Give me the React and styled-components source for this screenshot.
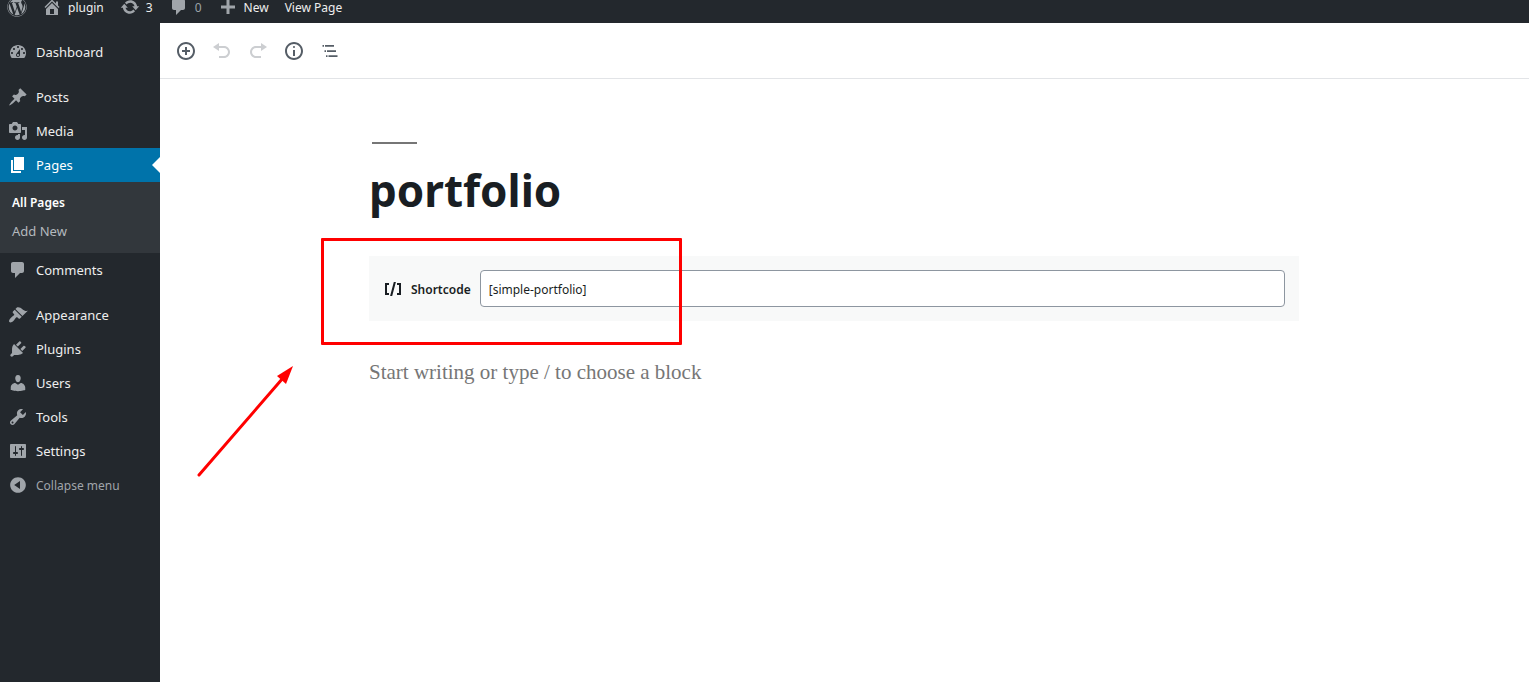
import React from "react";
import styled, { createGlobalStyle, css } from "styled-components";
import { FaWordpress } from "react-icons/fa";

const GlobalStyle = createGlobalStyle`
  *, *::before, *::after { box-sizing: border-box; }
  body {
    margin: 0;
    background: #fff;
    color: #191e23;
    font-family: "Noto Sans", "Open Sans", sans-serif;
    font-size: 12px;
  }
  button, input { font: inherit; }
  a { color: inherit; text-decoration: none; }
`;

const paths = {
  home: "M16 8.5l1.53 1.53-1.06 1.06L10 4.6l-6.47 6.49-1.06-1.06L10 2.5l4 4v-2h2v4zm-6-2.46l6 5.99V18H4v-5.97zM12 17v-5H8v5h4z",
  update: "M10.2 3.28c3.53 0 6.43 2.61 6.92 6h2.08l-3.5 4-3.5-4h2.32c-.45-1.97-2.21-3.45-4.32-3.45-1.45 0-2.73.71-3.54 1.78L4.95 5.66C6.23 4.2 8.11 3.28 10.2 3.28zm-.4 13.44c-3.52 0-6.43-2.61-6.92-6H.8l3.5-4c1.17 1.33 2.33 2.67 3.5 4H5.48c.45 1.97 2.21 3.45 4.32 3.45 1.45 0 2.73-.71 3.54-1.78l1.71 1.95c-1.28 1.46-3.15 2.38-5.25 2.38z",
  comments: "M5 2h9c1.1 0 2 .9 2 2v7c0 1.1-.9 2-2 2h-2l-5 5v-5H5c-1.1 0-2-.9-2-2V4c0-1.1.9-2 2-2z",
  plus: "M17 8.5v3h-5.5V17h-3v-5.5H3v-3h5.5V3h3v5.5z",
  dashboard: "M3.76 16h12.48c1.1-1.37 1.76-3.11 1.76-5 0-4.42-3.58-8-8-8s-8 3.58-8 8c0 1.89.66 3.63 1.76 5zM10 4c.55 0 1 .45 1 1s-.45 1-1 1-1-.45-1-1 .45-1 1-1zM6 6c.55 0 1 .45 1 1s-.45 1-1 1-1-.45-1-1 .45-1 1-1zm8 0c.55 0 1 .45 1 1s-.45 1-1 1-1-.45-1-1 .45-1 1-1zm-5.37 5.55L12 7v6c0 1.1-.9 2-2 2s-2-.9-2-2c0-.57.24-1.08.63-1.45zM4 10c.55 0 1 .45 1 1s-.45 1-1 1-1-.45-1-1 .45-1 1-1zm12 0c.55 0 1 .45 1 1s-.45 1-1 1-1-.45-1-1 .45-1 1-1zm-5 3c0-.55-.45-1-1-1s-1 .45-1 1 .45 1 1 1 1-.45 1-1z",
  posts: "M10.44 3.02l1.82-1.82 6.36 6.35-1.83 1.82c-1.05-.68-2.48-.57-3.41.36l-.75.75c-.92.93-1.04 2.35-.35 3.41l-1.83 1.82-2.41-2.41-2.8 2.79c-.42.42-3.38 2.71-3.8 2.29s1.86-3.39 2.28-3.81l2.79-2.79L4.1 9.36l1.83-1.82c1.05.69 2.48.57 3.4-.36l.75-.75c.93-.92 1.05-2.35.36-3.41z",
  media: "M13 11V4c0-.55-.45-1-1-1h-1.67L9 1H5L3.67 3H2c-.55 0-1 .45-1 1v7c0 .55.45 1 1 1h10c.55 0 1-.45 1-1zM7 4.5c1.38 0 2.5 1.12 2.5 2.5S8.38 9.5 7 9.5 4.5 8.38 4.5 7 5.62 4.5 7 4.5zM14 6h5v10.5c0 1.38-1.12 2.5-2.5 2.5S14 17.88 14 16.5s1.12-2.5 2.5-2.5c.17 0 .34.02.5.05V9h-3V6zm-4 8.05V13h2v3.5c0 1.38-1.12 2.5-2.5 2.5S7 17.88 7 16.5 8.12 14 9.5 14c.17 0 .34.02.5.05z",
  pages: "M6 15V2h10v13H6zm-1 1h8v2H3V5h2v11z",
  appearance: "M14.48 11.06L7.41 3.99l1.5-1.5c.5-.56 2.3-.47 3.51.32 1.21.8 1.43 1.28 2.91 2.1 1.18.64 2.45 1.26 4.45.85zm-.71.71L6.7 4.7 4.93 6.47c-.39.39-.39 1.02 0 1.41l1.06 1.06c.39.39.39 1.03 0 1.42-.6.6-1.43 1.11-2.21 1.69-.35.26-.7.53-1.01.84C1.43 14.23.4 16.08 1.4 17.07c.99 1 2.84-.03 4.18-1.36.31-.31.58-.66.85-1.02.57-.78 1.08-1.61 1.69-2.21.39-.39 1.02-.39 1.41 0l1.06 1.06c.39.39 1.02.39 1.41 0z",
  plugins: "M13.11 4.36L9.87 7.6 8 5.73l3.24-3.24c.35-.34 1.05-.2 1.56.32.52.51.66 1.21.31 1.55zm-8 1.77l.91-1.12 9.01 9.01-1.19.84c-.71.71-2.63 1.16-3.82 1.16H6.14L4.9 17.26c-.59.59-1.54.59-2.12 0-.59-.58-.59-1.53 0-2.12l1.24-1.24v-3.88c0-1.13.4-3.19 1.09-3.89zm7.26 3.97l3.24-3.24c.34-.35 1.04-.21 1.55.31.52.51.66 1.21.31 1.55l-3.24 3.25z",
  users: "M10 9.25c-2.27 0-2.73-3.44-2.73-3.44C7 4.02 7.82 2 9.97 2c2.16 0 2.98 2.02 2.71 3.81 0 0-.41 3.44-2.68 3.44zm0 2.57L12.72 10c2.39 0 4.52 2.33 4.52 4.53v2.49s-3.65 1.13-7.24 1.13c-3.65 0-7.24-1.13-7.24-1.13v-2.49c0-2.25 1.94-4.48 4.47-4.48z",
  tools: "M16.68 9.77c-1.34 1.34-3.3 1.67-4.95.99l-5.41 6.52c-.99.99-2.59.99-3.58 0s-.99-2.59 0-3.57l6.52-5.42c-.68-1.65-.35-3.61.99-4.95 1.28-1.28 3.12-1.62 4.72-1.06l-2.89 2.89 2.82 2.82 2.86-2.87c.53 1.58.18 3.39-1.08 4.65zM3.81 16.21c.4.39 1.04.39 1.43 0 .4-.4.4-1.04 0-1.43-.39-.4-1.03-.4-1.43 0-.39.39-.39 1.03 0 1.43z",
  settings: "M18 16V4c0-.55-.45-1-1-1H3c-.55 0-1 .45-1 1v12c0 .55.45 1 1 1h14c.55 0 1-.45 1-1zM8 11h1c.55 0 1 .45 1 1s-.45 1-1 1H8v1.5c0 .28-.22.5-.5.5s-.5-.22-.5-.5V13H6c-.55 0-1-.45-1-1s.45-1 1-1h1V5.5c0-.28.22-.5.5-.5s.5.22.5.5V11zm5-2h-1c-.55 0-1-.45-1-1s.45-1 1-1h1V5.5c0-.28.22-.5.5-.5s.5.22.5.5V7h1c.55 0 1 .45 1 1s-.45 1-1 1h-1v5.5c0 .28-.22.5-.5.5s-.5-.22-.5-.5V9z",
  collapse: "M10 2.16c4.33 0 7.84 3.51 7.84 7.84s-3.51 7.84-7.84 7.84S2.16 14.33 2.16 10 5.71 2.16 10 2.16zm2 11.72V6.12L6.18 9.97z",
  insert: "M10 1c-5 0-9 4-9 9s4 9 9 9 9-4 9-9-4-9-9-9zm0 16c-3.9 0-7-3.1-7-7s3.1-7 7-7 7 3.1 7 7-3.1 7-7 7zm1-11H9v3H6v2h3v3h2v-3h3V9h-3V6z",
  undo: "M12 5H7V2L1 6l6 4V7h5c2.2 0 4 1.8 4 4s-1.8 4-4 4H7v2h5c3.3 0 6-2.7 6-6s-2.7-6-6-6z",
  redo: "M8 5h5V2l6 4-6 4V7H8c-2.2 0-4 1.8-4 4s1.8 4 4 4h5v2H8c-3.3 0-6-2.7-6-6s2.7-6 6-6z",
  info: "M9 15h2V9H9v6zm1-10c-.5 0-1 .5-1 1s.5 1 1 1 1-.5 1-1-.5-1-1-1zm0-4c-5 0-9 4-9 9s4 9 9 9 9-4 9-9-4-9-9-9zm0 16c-3.9 0-7-3.1-7-7s3.1-7 7-7 7 3.1 7 7-3.1 7-7 7z",
  outline: "M2.5 4H4v1.7H2.5zM5 4h9v1.7H5zM4.5 9.2H6v1.7H4.5zM7 9.2h9v1.7H7zM6 14.3h1.5V16H6zM8.500 14.3h9V16h-9z",
  shortcode: "M6 14H4V6h2V4H2v12h4M7.1 17h2.1l3.7-14h-2.1M14 4v2h2v8h-2v2h4V4",
};

const Glyph = styled.svg`
  width: 20px;
  height: 20px;
  flex: none;
  fill: currentColor;
`;

function Icon({ name }) {
  return (
    <Glyph viewBox="0 0 20 20" aria-hidden="true">
      <path d={paths[name]} />
    </Glyph>
  );
}

const Page = styled.div`
  display: flex;
  flex-direction: column;
  min-height: 100vh;
`;

const AdminBar = styled.nav`
  display: flex;
  align-items: flex-end;
  height: 23px;
  overflow: hidden;
  padding-left: 7px;
  gap: 15px;
  background: #23282d;
  color: #eee;
  line-height: 14px;
`;

const BarLink = styled.a`
  display: flex;
  align-items: center;
  gap: 6px;
  height: 32px;
  white-space: nowrap;
  color: ${(p) => (p.$muted ? "#9ca2a7" : "#eee")};
  svg {
    width: 20px;
    height: 20px;
    color: #a0a5aa;
  }
`;

const BarText = styled.span`
  padding: 2px 1px 0 0;
`;

const Body = styled.div`
  display: flex;
  flex: 1;
`;

const Sidebar = styled.nav`
  flex: 0 0 160px;
  padding-top: 12px;
  background: #23282d;
  color: #eee;
  font-size: 13px;
`;

const MenuList = styled.ul`
  list-style: none;
  margin: 0;
  padding: 0;
`;

const MenuEntry = styled.li`
  margin-top: ${(p) => (p.$separated ? "11px" : "0")};
`;

const menuRow = css`
  display: flex;
  align-items: center;
  gap: 8px;
  width: 100%;
  height: 34px;
  padding: 0 8px;
  svg { color: #a0a5aa; }
`;

const MenuLink = styled.a`
  ${menuRow}
  ${(p) =>
    p.$current &&
    css`
      position: relative;
      background: #0073aa;
      color: #fff;
      svg { color: #fff; }
      &::after {
        content: "";
        position: absolute;
        right: 0;
        top: 9px;
        border: 8px solid transparent;
        border-left-width: 0;
        border-right-color: #fff;
      }
    `}
`;

const CollapseButton = styled.button`
  ${menuRow}
  border: 0;
  background: none;
  color: #a0a5aa;
  font-size: 12px;
`;

const SubMenu = styled.ul`
  list-style: none;
  margin: 0;
  padding: 7px 12px 8px;
  background: #32373c;
`;

const SubLink = styled.a`
  display: block;
  line-height: 28px;
  font-size: ${(p) => (p.$current ? "12px" : "13px")};
  color: ${(p) => (p.$current ? "#fff" : "#b4b9be")};
  font-weight: ${(p) => (p.$current ? 600 : 400)};
`;

const Editor = styled.main`
  flex: 1;
  min-width: 0;
`;

const Toolbar = styled.header`
  display: flex;
  align-items: center;
  height: 56px;
  padding-left: 8px;
  border-bottom: 1px solid #e2e4e7;
`;

const ToolButton = styled.button`
  display: flex;
  align-items: center;
  justify-content: center;
  width: 36px;
  height: 36px;
  padding: 0;
  border: 0;
  background: none;
  color: #555d66;
  &:disabled { color: #ccced1; }
`;

const Canvas = styled.div`
  padding: 63px 21px 0 0;
`;

const Column = styled.div`
  position: relative;
  max-width: 930px;
  margin: 0 auto;
`;

const TitleRule = styled.hr`
  width: 45px;
  height: 2px;
  margin: 0 0 0 3px;
  border: 0;
  background: #767676;
`;

const Title = styled.h1`
  margin: 16px 0 36px;
  font-size: 44px;
  font-weight: 700;
  line-height: 60px;
`;

const ShortcodeBlock = styled.section`
  display: flex;
  align-items: center;
  gap: 8px;
  padding: 14px;
  background: #f8f9f9;
`;

const ShortcodeLabel = styled.label`
  display: flex;
  align-items: center;
  gap: 8px;
  padding: 2px 1px 0 0;
  font-weight: 600;
  svg { margin-bottom: 2px; }
`;

const ShortcodeInput = styled.input`
  flex: 1;
  min-width: 0;
  height: 37px;
  padding: 2px 8px 0;
  border: 1px solid #8d96a0;
  border-radius: 4px;
  background: #fff;
  color: #191e23;
`;

const WritingPrompt = styled.input`
  display: block;
  width: 100%;
  height: 32px;
  margin-top: 35px;
  padding: 0;
  border: 0;
  font-family: "Liberation Serif", serif;
  font-size: 21px;
  &::placeholder { color: #767676; opacity: 1; }
`;

const Highlight = styled.div`
  position: absolute;
  left: -48px;
  top: 96px;
  width: 361px;
  height: 107px;
  border: 3px solid #f00;
  border-radius: 1px;
  pointer-events: none;
`;

const Arrow = styled.svg`
  position: absolute;
  left: -174px;
  top: 222px;
  width: 100px;
  height: 116px;
  pointer-events: none;
`;

const menu = [
  { label: "Dashboard", icon: "dashboard" },
  { label: "Posts", icon: "posts", separated: true },
  { label: "Media", icon: "media" },
  { label: "Pages", icon: "pages", current: true, children: ["All Pages", "Add New"] },
  { label: "Comments", icon: "comments" },
  { label: "Appearance", icon: "appearance", separated: true },
  { label: "Plugins", icon: "plugins" },
  { label: "Users", icon: "users" },
  { label: "Tools", icon: "tools" },
  { label: "Settings", icon: "settings" },
];

const tools = [
  { label: "Add block", icon: "insert" },
  { label: "Undo", icon: "undo", disabled: true },
  { label: "Redo", icon: "redo", disabled: true },
  { label: "Content structure", icon: "info" },
  { label: "Block navigation", icon: "outline" },
];

export default function App() {
  return (
    <Page>
      <GlobalStyle />
      <AdminBar aria-label="Toolbar">
        <BarLink href="#about" aria-label="About WordPress"><FaWordpress /></BarLink>
        <BarLink href="#site"><Icon name="home" /><BarText>plugin</BarText></BarLink>
        <BarLink href="#updates"><Icon name="update" /><BarText>3</BarText></BarLink>
        <BarLink href="#comments" $muted><Icon name="comments" /><BarText>0</BarText></BarLink>
        <BarLink href="#new"><Icon name="plus" /><BarText>New</BarText></BarLink>
        <BarLink href="#view"><BarText>View Page</BarText></BarLink>
      </AdminBar>
      <Body>
        <Sidebar aria-label="Main menu">
          <MenuList>
            {menu.map((item) => (
              <MenuEntry key={item.label} $separated={item.separated}>
                <MenuLink href={`#${item.icon}`} $current={item.current}>
                  <Icon name={item.icon} />
                  {item.label}
                </MenuLink>
                {item.children && (
                  <SubMenu>
                    {item.children.map((child, i) => (
                      <li key={child}>
                        <SubLink href="#pages" $current={i === 0}>{child}</SubLink>
                      </li>
                    ))}
                  </SubMenu>
                )}
              </MenuEntry>
            ))}
            <MenuEntry>
              <CollapseButton type="button"><Icon name="collapse" />Collapse menu</CollapseButton>
            </MenuEntry>
          </MenuList>
        </Sidebar>
        <Editor>
          <Toolbar>
            {tools.map((tool) => (
              <ToolButton key={tool.icon} type="button" aria-label={tool.label} disabled={tool.disabled}>
                <Icon name={tool.icon} />
              </ToolButton>
            ))}
          </Toolbar>
          <Canvas>
            <Column>
              <TitleRule />
              <Title>portfolio</Title>
              <ShortcodeBlock>
                <ShortcodeLabel htmlFor="shortcode"><Icon name="shortcode" />Shortcode</ShortcodeLabel>
                <ShortcodeInput id="shortcode" type="text" defaultValue="[simple-portfolio]" />
              </ShortcodeBlock>
              <WritingPrompt type="text" aria-label="Add block" placeholder="Start writing or type / to choose a block" />
              <Highlight />
              <Arrow viewBox="0 0 100 116" aria-hidden="true">
                <path d="M4 111L88 14" stroke="#f00" strokeWidth="3" strokeLinecap="round" />
                <path d="M98 2L82 12L91 20Z" fill="#f00" />
              </Arrow>
            </Column>
          </Canvas>
        </Editor>
      </Body>
    </Page>
  );
}
